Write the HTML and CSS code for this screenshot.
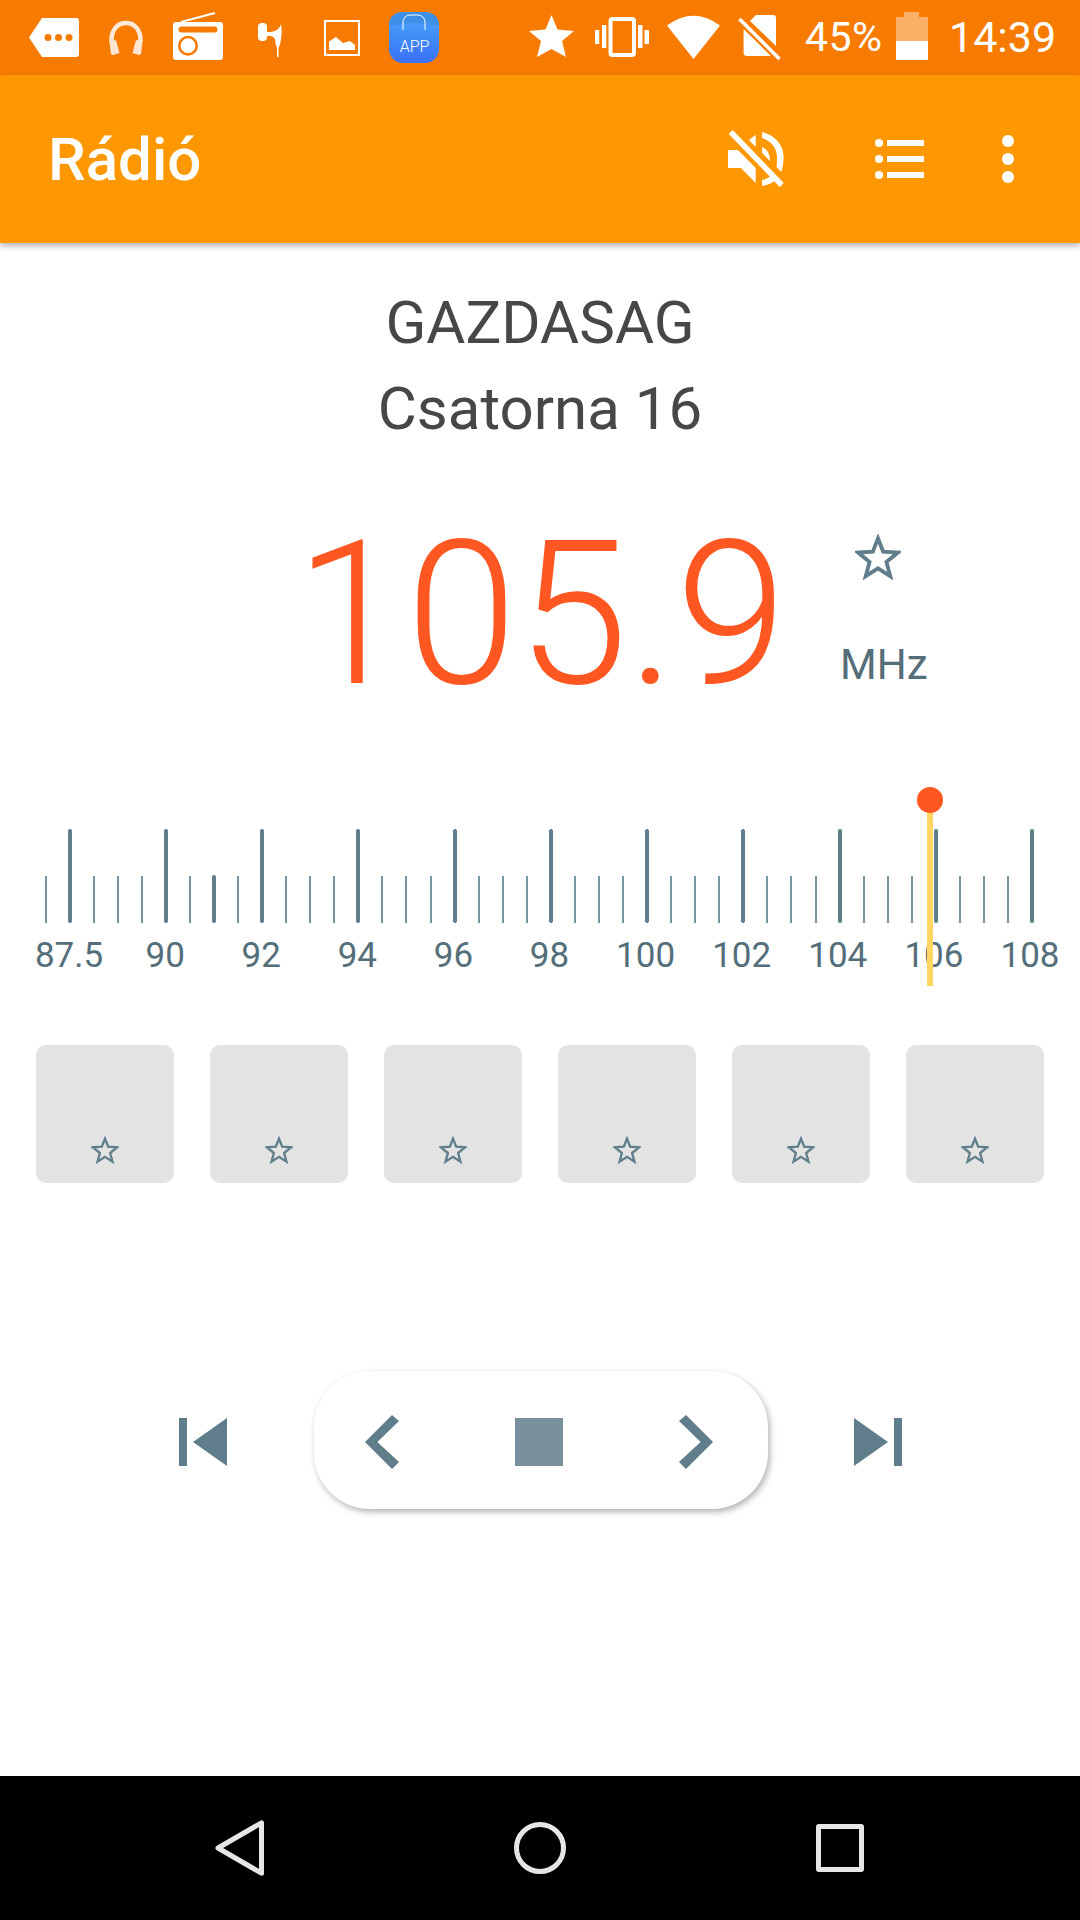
FILE: index.html
```html
<!DOCTYPE html>
<html lang="hu">
<head>
<meta charset="UTF-8">
<meta name="viewport" content="width=device-width, initial-scale=1.0">
<title>Rádió</title>
<link rel="stylesheet" href="styles.css">
</head>
<body>
<div class="phone">
    <div class="status-bar">
        <svg class="ic ic-tag" viewBox="29 0 50 75"><path d="M29 37.500L42 18H76a3 3 0 0 1 3 3V54a3 3 0 0 1-3 3H42Z" fill="#fff"/><g fill="#f77b00"><circle cx="48" cy="37.500" r="3.500"/><circle cx="58.500" cy="37.500" r="3.500"/><circle cx="69" cy="37.500" r="3.500"/></g></svg>
        <svg class="ic ic-phones" viewBox="109 0 34 75"><path d="M111.500 42C111 29 118 23 126 23S141 29 140.500 42" fill="none" stroke="#fdeadb" stroke-width="4.500"/><path d="M109.500 41.500L116 40L119.500 53L113 55Q111 55 110.800 53Z M142.500 41.500L136 40L132.500 53L139 55Q141 55 141.200 53Z" fill="#fde6d2"/></svg>
        <svg class="ic ic-radio" viewBox="173 0 50 75"><path d="M181 22L215 13" stroke="#fff" stroke-width="2"/><rect x="173" y="22" width="50" height="38" rx="3" fill="#fff"/><rect x="178.500" y="26.500" width="39" height="6" rx="3" fill="#f77b00"/><circle cx="188" cy="45.700" r="8.700" fill="#fff" stroke="#f77b00" stroke-width="2.600"/></svg>
        <svg class="ic ic-ear" viewBox="258 0 24 75"><rect x="258" y="23" width="9" height="18" rx="4" fill="#fff"/><path d="M281 24C280 28 277 31 271 32H267V36H271C275 37 276 41 275.500 44L277 48V57H278.500V48C281 44 282.500 32 281 24Z" fill="#fff"/></svg>
        <svg class="ic ic-pic" viewBox="324 0 36 75"><rect x="325" y="21" width="34" height="34" fill="none" stroke="#fff" stroke-width="2"/><path d="M329 50V41.500L336 37L343 43L350 41L355 45V50Z" fill="#fff"/></svg>
        <svg class="ic ic-app" viewBox="389 0 50 75">
            <defs><linearGradient id="appBlue" x1="0" y1="0" x2="0" y2="1"><stop offset="0" stop-color="#4aa8fa"/><stop offset="1" stop-color="#3a70f6"/></linearGradient></defs>
            <rect x="389" y="12" width="50" height="51" rx="14" fill="url(#appBlue)"/>
            <path d="M389 25V26Q414 20 439 26V25C439 17 433 12 425 12H403C395 12 389 17 389 25Z" fill="#3d8fe8"/>
            <path d="M403 30V22a7 7 0 0 1 7-7h8a7 7 0 0 1 7 7V30" fill="none" stroke="#fff" stroke-width="1"/>
            <text x="414.500" y="52" class="app-label">APP</text>
        </svg>
        <svg class="ic ic-star" viewBox="529 0 45 75"><path d="M551.500 15L557.500 29.500L574 31L562 41L566 57L551.500 49L537 57L541 41L529 31L545.500 29.500Z" fill="#fff"/></svg>
        <svg class="ic ic-vibrate" viewBox="595 0 54 75"><rect x="610.500" y="19" width="23.500" height="36" rx="2" fill="none" stroke="#fff" stroke-width="4"/><path d="M595 30h4.300v14H595Z M602 25h4.400v23H602Z M638 25h4.500v23H638Z M644.500 30H649v14h-4.500Z" fill="#fff"/></svg>
        <svg class="ic ic-wifi" viewBox="667 0 53 75"><path d="M667 25.500Q693.500 6 720 25.500L693.500 59Z" fill="#fff"/></svg>
        <svg class="ic ic-sim" viewBox="738 0 43 75"><path d="M750 21L756 15H773Q776 15 776 18V46Z M743.600 29L771 56H747Q743.600 56 743.600 53Z" fill="#fff"/><path d="M739.500 19L779.500 59" stroke="#fff" stroke-width="3.500"/></svg>
        <span class="status-text status-pct">45%</span>
        <svg class="ic ic-battery" viewBox="896 0 32 75"><path d="M904 12h15v5h9V41H896V17h8Z" fill="#fbb068"/><rect x="896" y="41" width="32" height="19" fill="#fff"/></svg>
        <span class="status-text status-time">14:39</span>
    </div>

    <header class="toolbar">
        <h1 class="toolbar-title">Rádió</h1>
        <svg class="ic-mute" viewBox="728 120 56 75">
            <path d="M728 150H738L755.700 168V183L741 168H728Z M749 140L755.700 134.700V147Z M762 147Q770 150 770 161L762 153Z M762 132C775 135 783.600 145 783.600 157C783.600 163 782.500 168 781.400 172L776.500 167C777 164 777 160 777 157C777 148 771 141 762 138Z M762 180C765 179.500 768 178 770 176.500L774.500 181C771 183.500 767 185.500 762 186Z" fill="#fff"/>
            <path d="M730.700 132L781.800 185" stroke="#fff" stroke-width="5.500"/>
        </svg>
        <div class="list-icon">
            <div class="list-row"><i></i><b></b></div>
            <div class="list-row"><i></i><b></b></div>
            <div class="list-row"><i></i><b></b></div>
        </div>
        <div class="more-icon"><i></i><i></i><i></i></div>
    </header>

    <main class="content">
        <div class="station">
            <div>GAZDASAG</div>
            <div>Csatorna 16</div>
        </div>

        <div class="freq-row">
            <div class="freq">105.9</div>
            <div class="freq-side">
                <svg class="star-big" viewBox="0 0 24 24"><path d="M12 2.300L14.700 9.200L22.400 9.700L16.400 14.600L18.400 22L12 17.900L5.600 22L7.600 14.600L1.600 9.700L9.300 9.200Z"/></svg>
                <div class="unit">MHz</div>
            </div>
        </div>

        <div class="tuner">
            <div class="ticks">
                <span></span><span class="major"></span><span></span><span></span><span></span><span class="major"></span><span></span><span class="thick"></span><span></span><span class="major"></span><span></span><span></span><span></span><span class="major"></span><span></span><span></span><span></span><span class="major"></span><span></span><span></span><span></span><span class="major"></span><span></span><span></span><span></span><span class="major"></span><span></span><span></span><span></span><span class="major"></span><span></span><span></span><span></span><span class="major"></span><span></span><span></span><span></span><span class="major"></span><span></span><span></span><span></span><span class="major"></span>
            </div>
            <div class="scale">
                <span>87.5</span><span>90</span><span>92</span><span>94</span><span>96</span><span>98</span><span>100</span><span>102</span><span>104</span><span>106</span><span>108</span>
            </div>
            <div class="needle"></div>
        </div>

        <div class="presets">
            <div class="preset"><svg class="star-small" viewBox="0 0 24 24"><path d="M12 2.300L14.700 9.200L22.400 9.700L16.400 14.600L18.400 22L12 17.900L5.600 22L7.600 14.600L1.600 9.700L9.300 9.200Z"/></svg></div>
            <div class="preset"><svg class="star-small" viewBox="0 0 24 24"><path d="M12 2.300L14.700 9.200L22.400 9.700L16.400 14.600L18.400 22L12 17.900L5.600 22L7.600 14.600L1.600 9.700L9.300 9.200Z"/></svg></div>
            <div class="preset"><svg class="star-small" viewBox="0 0 24 24"><path d="M12 2.300L14.700 9.200L22.400 9.700L16.400 14.600L18.400 22L12 17.900L5.600 22L7.600 14.600L1.600 9.700L9.300 9.200Z"/></svg></div>
            <div class="preset"><svg class="star-small" viewBox="0 0 24 24"><path d="M12 2.300L14.700 9.200L22.400 9.700L16.400 14.600L18.400 22L12 17.900L5.600 22L7.600 14.600L1.600 9.700L9.300 9.200Z"/></svg></div>
            <div class="preset"><svg class="star-small" viewBox="0 0 24 24"><path d="M12 2.300L14.700 9.200L22.400 9.700L16.400 14.600L18.400 22L12 17.900L5.600 22L7.600 14.600L1.600 9.700L9.300 9.200Z"/></svg></div>
            <div class="preset"><svg class="star-small" viewBox="0 0 24 24"><path d="M12 2.300L14.700 9.200L22.400 9.700L16.400 14.600L18.400 22L12 17.900L5.600 22L7.600 14.600L1.600 9.700L9.300 9.200Z"/></svg></div>
        </div>

        <div class="transport">
            <svg class="skip" viewBox="0 0 48 48"><path d="M0 0h8v48H0Z M14 24L48 0V48Z"/></svg>
            <div class="pill">
                <svg class="chevron" viewBox="0 0 34 54"><path d="M0 27L27 0L34 6L12.400 27L34 47L27 54Z"/></svg>
                <div class="stop"></div>
                <svg class="chevron" viewBox="0 0 34 54"><path d="M34 27L7 0L0 6L21.600 27L0 47L7 54Z"/></svg>
            </div>
            <svg class="skip" viewBox="0 0 48 48"><path d="M48 0h-8v48h8Z M34 24L0 0V48Z"/></svg>
        </div>
    </main>

    <footer class="nav-bar">
        <svg class="nav-back" viewBox="0 0 50 56"><path d="M3 28L46.500 2.800V53.200Z"/></svg>
        <div class="nav-home"></div>
        <div class="nav-recent"></div>
    </footer>
</div>
</body>
</html>
```

FILE: styles.css
```css
body {
    margin: 0;
    font-family: Roboto, "Noto Sans", sans-serif;
    background-color: #fff;
}

.phone {
    width: 1080px;
    height: 1920px;
    display: flex;
    flex-direction: column;
    overflow: hidden;
}

/* status bar */
.status-bar {
    height: 75px;
    flex-shrink: 0;
    display: flex;
    align-items: center;
    background-color: #f77b00;
    color: #fff;
}

.ic {
    height: 75px;
    flex-shrink: 0;
}

.ic-tag { width: 50px; margin-left: 29px; }
.ic-phones { width: 34px; margin-left: 30px; }
.ic-radio { width: 50px; margin-left: 30px; }
.ic-ear { width: 24px; margin-left: 35px; }
.ic-pic { width: 36px; margin-left: 42px; }
.ic-app { width: 50px; margin-left: 29px; }
.ic-star { width: 45px; margin-left: 90px; }
.ic-vibrate { width: 54px; margin-left: 21px; }
.ic-wifi { width: 53px; margin-left: 18px; }
.ic-sim { width: 43px; margin-left: 18px; }
.ic-battery { width: 32px; margin-left: 13px; }

.app-label {
    font-size: 16px;
    font-weight: 300;
    fill: #fff;
    text-anchor: middle;
}

.status-text {
    font-size: 43px;
    line-height: 75px;
}

.status-pct { margin-left: 24px; width: 78px; white-space: nowrap; font-size: 41px; letter-spacing: 0.5px; }
.status-time { margin-left: 21px; white-space: nowrap; }

/* toolbar */
.toolbar {
    height: 168px;
    flex-shrink: 0;
    position: relative;
    display: flex;
    align-items: center;
    background-color: #ff9800;
    box-shadow: 0 3px 6px rgba(0, 0, 0, 0.3);
    color: #fff;
}

.toolbar-title {
    margin: 0 0 0 48px;
    font-size: 60px;
    font-weight: 500;
    flex-grow: 1;
}

.ic-mute {
    width: 56px;
    height: 75px;
    margin-top: -3px;
}

.list-icon {
    margin-left: 91px;
    display: flex;
    flex-direction: column;
    gap: 10px;
}

.list-row {
    display: flex;
    align-items: center;
    gap: 4px;
    height: 6px;
}

.list-row i {
    width: 8px;
    height: 8px;
    border-radius: 50%;
    background-color: #fff;
}

.list-row b {
    width: 37px;
    height: 6px;
    background-color: #fff;
}

.more-icon {
    margin: 0 66px 0 78px;
    display: flex;
    flex-direction: column;
    gap: 6px;
}

.more-icon i {
    width: 12px;
    height: 12px;
    border-radius: 50%;
    background-color: #fff;
}

/* main */
.content {
    flex-grow: 1;
    display: flex;
    flex-direction: column;
}

.station {
    margin-top: 37px;
    text-align: center;
    font-size: 60px;
    line-height: 86px;
    color: #474747;
}

.freq-row {
    margin-top: 30px;
    height: 266px;
    display: flex;
    padding-left: 295px;
}

.freq {
    width: 545px;
    font-size: 200px;
    font-weight: 300;
    line-height: 266px;
    color: #ff5722;
}

.freq-side {
    display: flex;
    flex-direction: column;
    align-items: flex-start;
}

.star-big {
    width: 46px;
    height: 46px;
    margin: 52px 0 0 15px;
}

.star-big path,
.star-small path {
    fill: none;
    stroke: #607d8b;
    stroke-width: 2;
}

.unit {
    margin-top: 60px;
    font-size: 42px;
    color: #546e7a;
}

/* tuner */
.tuner {
    position: relative;
    margin-top: 39px;
    height: 180px;
}

.ticks {
    display: grid;
    grid-template-columns: repeat(42, 24.07px);
    justify-items: center;
    align-items: end;
    height: 94px;
    margin-top: 42px;
    padding-left: 33.500px;
}

.ticks span {
    width: 2px;
    height: 47px;
    background-color: #7a95a2;
}

.ticks .major {
    width: 4px;
    height: 94px;
    border-radius: 2px;
    background-color: #607d8b;
}

.ticks .thick {
    width: 4px;
    height: 48px;
    border-radius: 2px;
    background-color: #607d8b;
}

.scale {
    display: grid;
    grid-template-columns: repeat(11, 96.100px);
    justify-items: center;
    padding-left: 21px;
    margin-top: 13px;
    font-size: 35px;
    line-height: 40px;
    color: #546e7a;
}

.needle {
    position: absolute;
    left: 926.500px;
    top: 13px;
    width: 6px;
    height: 186px;
    background-color: #ffd760;
}

.needle::before {
    content: "";
    position: absolute;
    left: -10px;
    top: -13px;
    width: 26px;
    height: 26px;
    border-radius: 50%;
    background-color: #ff5722;
}

/* presets */
.presets {
    margin: 78px 36px 0;
    display: flex;
    gap: 36px;
}

.preset {
    width: 138px;
    height: 138px;
    display: flex;
    align-items: flex-end;
    justify-content: center;
    border-radius: 10px;
    background-color: #e3e3e3;
}

.star-small {
    width: 28px;
    height: 28px;
    margin-bottom: 19px;
}

/* transport */
.transport {
    margin-top: 188px;
    display: flex;
    align-items: center;
    padding-left: 179px;
}

.skip {
    width: 48px;
    height: 48px;
    margin-top: 4px;
    fill: #607d8b;
}

.pill {
    width: 454px;
    height: 138px;
    margin: 0 86px 0 87px;
    box-sizing: border-box;
    padding: 4px 55px 0 51px;
    display: flex;
    align-items: center;
    justify-content: space-between;
    border-radius: 56px;
    background-color: #fff;
    box-shadow: 2px 3px 6px rgba(0, 0, 0, 0.3);
}

.chevron {
    width: 34px;
    height: 54px;
    fill: #607d8b;
}

.stop {
    width: 48px;
    height: 48px;
    background-color: #78909c;
}

/* nav bar */
.nav-bar {
    height: 144px;
    flex-shrink: 0;
    display: flex;
    align-items: center;
    background-color: #000;
}

.nav-back {
    width: 50px;
    height: 56px;
    margin-left: 215px;
    fill: none;
    stroke: #e6e6e6;
    stroke-width: 5;
    stroke-linejoin: round;
}

.nav-home {
    width: 52px;
    height: 52px;
    margin-left: 249px;
    box-sizing: border-box;
    border: 5px solid #e6e6e6;
    border-radius: 50%;
}

.nav-recent {
    width: 48px;
    height: 48px;
    margin-left: 250px;
    box-sizing: border-box;
    border: 5px solid #e6e6e6;
    border-radius: 3px;
}
```
